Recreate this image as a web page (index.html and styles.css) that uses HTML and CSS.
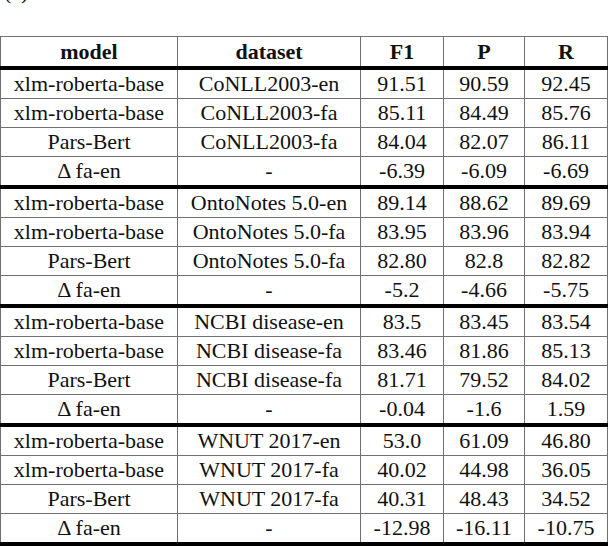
FILE: index.html
```html
<!DOCTYPE html>
<html lang="en">
<head>
    <meta charset="UTF-8">
    <link rel="stylesheet" href="styles.css">
</head>
<body>
    <div class="caption">(a)</div>
    <table class="results">
        <thead>
            <tr><th class="c-model">model</th><th class="c-data">dataset</th><th class="c-num">F1</th><th class="c-p">P</th><th>R</th></tr>
        </thead>
        <tbody>
            <tr><td>xlm-roberta-base</td><td>CoNLL2003-en</td><td>91.51</td><td>90.59</td><td>92.45</td></tr>
            <tr><td>xlm-roberta-base</td><td>CoNLL2003-fa</td><td>85.11</td><td>84.49</td><td>85.76</td></tr>
            <tr><td>Pars-Bert</td><td>CoNLL2003-fa</td><td>84.04</td><td>82.07</td><td>86.11</td></tr>
            <tr><td>&Delta; fa-en</td><td>-</td><td>-6.39</td><td>-6.09</td><td>-6.69</td></tr>
        </tbody>
        <tbody>
            <tr><td>xlm-roberta-base</td><td>OntoNotes 5.0-en</td><td>89.14</td><td>88.62</td><td>89.69</td></tr>
            <tr><td>xlm-roberta-base</td><td>OntoNotes 5.0-fa</td><td>83.95</td><td>83.96</td><td>83.94</td></tr>
            <tr><td>Pars-Bert</td><td>OntoNotes 5.0-fa</td><td>82.80</td><td>82.8</td><td>82.82</td></tr>
            <tr><td>&Delta; fa-en</td><td>-</td><td>-5.2</td><td>-4.66</td><td>-5.75</td></tr>
        </tbody>
        <tbody>
            <tr><td>xlm-roberta-base</td><td>NCBI disease-en</td><td>83.5</td><td>83.45</td><td>83.54</td></tr>
            <tr><td>xlm-roberta-base</td><td>NCBI disease-fa</td><td>83.46</td><td>81.86</td><td>85.13</td></tr>
            <tr><td>Pars-Bert</td><td>NCBI disease-fa</td><td>81.71</td><td>79.52</td><td>84.02</td></tr>
            <tr><td>&Delta; fa-en</td><td>-</td><td>-0.04</td><td>-1.6</td><td>1.59</td></tr>
        </tbody>
        <tbody>
            <tr><td>xlm-roberta-base</td><td>WNUT 2017-en</td><td>53.0</td><td>61.09</td><td>46.80</td></tr>
            <tr><td>xlm-roberta-base</td><td>WNUT 2017-fa</td><td>40.02</td><td>44.98</td><td>36.05</td></tr>
            <tr><td>Pars-Bert</td><td>WNUT 2017-fa</td><td>40.31</td><td>48.43</td><td>34.52</td></tr>
            <tr><td>&Delta; fa-en</td><td>-</td><td>-12.98</td><td>-16.11</td><td>-10.75</td></tr>
        </tbody>
    </table>
</body>
</html>
```

FILE: styles.css
```css
*{
    padding: 0;
    margin: 0;
}

body{
    background-color: #fff;
    font-family: "Liberation Serif", "Times New Roman", serif;
    color: #111;
    overflow: hidden;
}

/* only the bottom of the label shows, as in the cropped figure */
.caption{
    height: 22px;
    font-size: 22px;
    line-height: 22px;
    padding-left: 4px;
    margin-top: -19px;
    margin-bottom: 33px;
}

.results{
    width: 608px;
    border-collapse: collapse;
    font-size: 22px;
}

.results th,
.results td{
    border: 1px solid #707070;
    text-align: center;
    white-space: nowrap;
    padding: 0;
}

.results th{
    height: 29px;
    font-weight: bold;
}

.results td{
    height: 28px;
}

.results thead tr{
    border-top: 1px solid #707070;
}

.results tbody{
    border-top: 4px solid #000;
}

.results tbody:last-child{
    border-bottom: 4px solid #000;
}

.c-model{
    width: 176px;
}
.c-data{
    width: 182px;
}
.c-num{
    width: 82px;
}
.c-p{
    width: 80px;
}
```
